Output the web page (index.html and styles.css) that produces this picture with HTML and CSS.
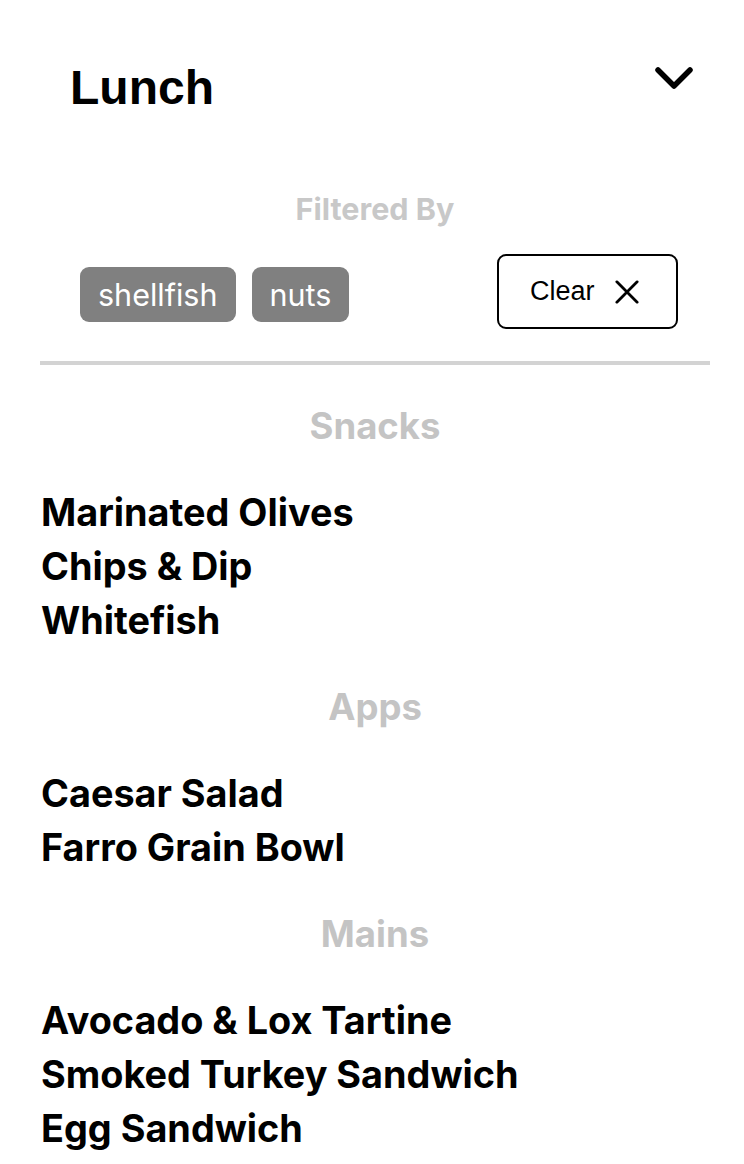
FILE: index.html
```html
<!DOCTYPE html>
<html>
<head>
<meta charset="utf-8">
<link rel="stylesheet" href="styles.css">
</head>
<body>
<div class="panel">
  <div class="header">
    <h1 class="title">Lunch</h1>
    <svg class="chevron" width="38" height="24" viewBox="0 0 38 24"><polyline points="3,3 19,19 35,3" fill="none" stroke="#000" stroke-width="5.5" stroke-linecap="round" stroke-linejoin="round"/></svg>
  </div>
  <div class="filtered-label">Filtered By</div>
  <div class="filters">
    <div class="chips">
      <span class="chip">shellfish</span>
      <span class="chip">nuts</span>
    </div>
    <button class="clear-btn">Clear
      <svg width="26" height="26" viewBox="0 0 26 26"><path d="M2,2 L24,24 M24,2 L2,24" stroke="#000" stroke-width="3" stroke-linecap="round"/></svg>
    </button>
  </div>
  <div class="divider"></div>
  <section class="section">
    <h2 class="section-title">Snacks</h2>
    <ul class="items">
      <li>Marinated Olives</li>
      <li>Chips &amp; Dip</li>
      <li>Whitefish</li>
    </ul>
  </section>
  <section class="section">
    <h2 class="section-title">Apps</h2>
    <ul class="items">
      <li>Caesar Salad</li>
      <li>Farro Grain Bowl</li>
    </ul>
  </section>
  <section class="section">
    <h2 class="section-title">Mains</h2>
    <ul class="items">
      <li>Avocado &amp; Lox Tartine</li>
      <li>Smoked Turkey Sandwich</li>
      <li>Egg Sandwich</li>
    </ul>
  </section>
</div>
</body>
</html>
```

FILE: styles.css
```css
html, body {
  margin: 0;
  padding: 0;
  background: #fff;
}
body {
  font-family: Inter, "Liberation Sans", sans-serif;
  color: #000;
}
.panel {
  padding: 0 34px 0 40px;
}
.header {
  display: flex;
  justify-content: space-between;
  align-items: flex-start;
  padding: 60px 17px 0 30px;
}
.title {
  margin: 0;
  font-family: "Liberation Sans", Arial, sans-serif;
  font-weight: 700;
  font-size: 48px;
  line-height: 56px;
}
.chevron {
  display: block;
  margin-top: 7px;
}
.filtered-label {
  margin-top: 76px;
  text-align: center;
  font-size: 30.5px;
  line-height: 34px;
  font-weight: 700;
  color: #c8c8c8;
}
.filters {
  display: flex;
  justify-content: space-between;
  align-items: center;
  padding: 0 32px 0 40px;
  margin-top: 28px;
}
.chips {
  display: flex;
  gap: 16px;
  margin-top: 5px;
}
.chip {
  background: #808080;
  color: #fff;
  font-size: 30.5px;
  line-height: 55px;
  height: 55px;
  padding: 0 18px;
  border-radius: 9px;
}
.clear-btn {
  display: flex;
  align-items: center;
  gap: 20px;
  height: 75px;
  width: 181px;
  padding: 0 0 0 31px;
  border: 2px solid #000;
  border-radius: 9px;
  background: #fff;
  font-family: "Liberation Sans", Arial, sans-serif;
  font-size: 27px;
  color: #000;
}
.clear-btn svg {
  width: 24px;
  height: 24px;
}
.divider {
  height: 4px;
  background: #d3d3d3;
  margin-top: 32px;
}
.section-title {
  margin: 39px 0 0;
  text-align: center;
  font-size: 36.5px;
  line-height: 44px;
  font-weight: 700;
  color: #c4c4c4;
}
.items {
  list-style: none;
  margin: 37px 0 0;
  padding: 0;
}
.items li {
  font-size: 37.8px;
  line-height: 54px;
  font-weight: 700;
  padding-left: 1px;
}
.section + .section .section-title {
  margin-top: 38px;
}
```
